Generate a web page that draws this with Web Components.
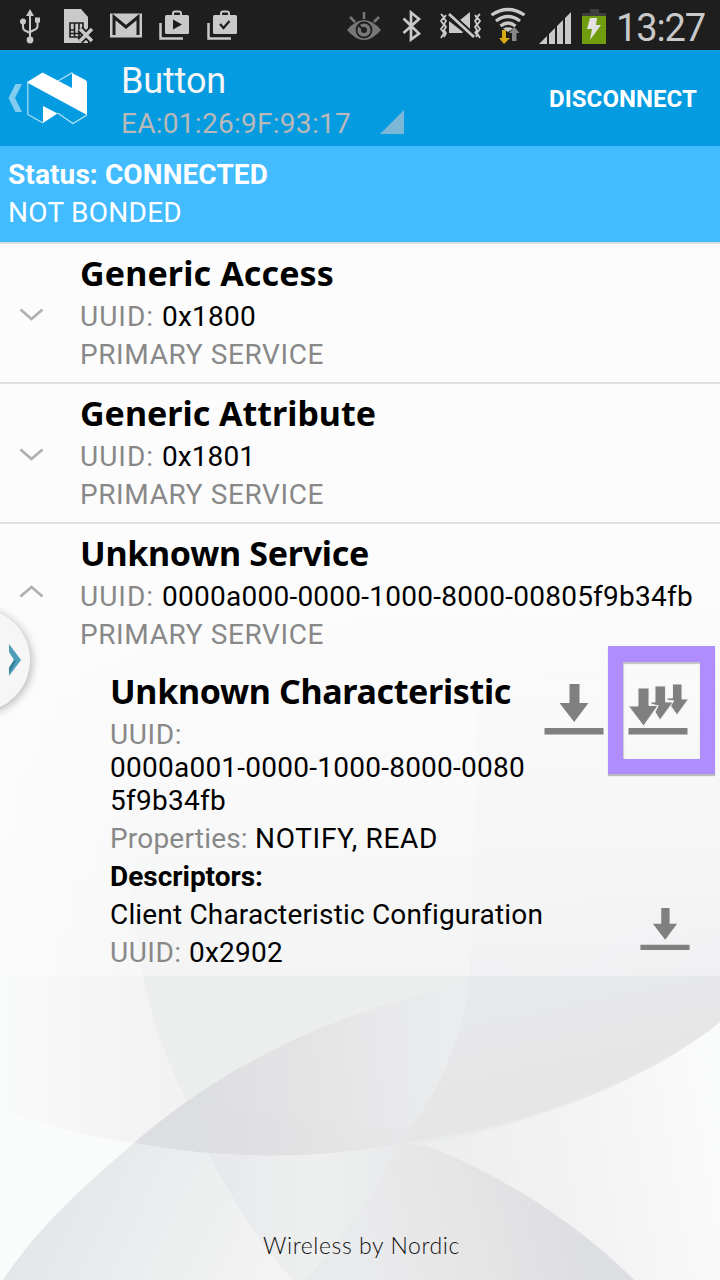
<!DOCTYPE html>
<html lang="en"><head><meta charset="utf-8"><title>Device services</title>
<style>html,body{margin:0;width:720px;height:1280px;overflow:hidden;background:#f5f5f5;font-family:Roboto,sans-serif}</style></head>
<body><app-screen></app-screen>
<script>
const define=(name,html,after)=>customElements.define(name,class extends HTMLElement{
  constructor(){super();this.attachShadow({mode:'open'}).innerHTML=html}
  connectedCallback(){if(after)after(this,this.shadowRoot)}
});

// Text tracked so that its line fills the width given in the w attribute.
define('fit-text','<style>:host{display:inline-block;white-space:pre;vertical-align:baseline}span{white-space:pre}</style><span></span>',(h,r)=>{
  const s=r.querySelector('span');s.textContent=h.getAttribute('t');
  const n=s.textContent.length,w=+h.getAttribute('w');
  s.style.letterSpacing=((w-s.getBoundingClientRect().width)/n)+'px';
});

define('status-bar',`<style>:host{display:flex;justify-content:space-between;height:50px;background:#1e1e1e;color:#c9c9c9}
svg{display:block}.r{display:flex}.t{width:104px;font-size:38px;line-height:57px}</style>
<svg width="250" height="50" fill="#c9c9c9" stroke="none">
<g><path d="M30 9l4 7h-8z"/><circle cx="30" cy="40" r="3.4"/><circle cx="23" cy="21.5" r="3"/><rect x="35" y="17.500" width="5" height="5"/><path d="M30 14V40M23 22V27Q23 30 26 31L30 33M37.500 21V26Q37.500 29 34 30L30 32" fill="none" stroke="#c9c9c9" stroke-width="2"/></g>
<path d="M64 9h17l7 8v26H64z"/><path d="M70 23h13v14H70zM70 30h4M79 30h4M74.500 23v14M79 23v14M70 33.500h13" fill="none" stroke="#1e1e1e" stroke-width="1.600"/><path d="M80 29l12 12M92 29L80 41" stroke="#1e1e1e" stroke-width="7"/><path d="M80 29l12 12M92 29L80 41" stroke="#c9c9c9" stroke-width="3.500"/>
<rect x="110" y="13.500" width="32" height="24"/><path d="M114 35V17L126 27 138 17V35" fill="none" stroke="#1e1e1e" stroke-width="3"/>
<g id="a"><path d="M160.500 23V38.500H183" fill="none" stroke="#c9c9c9" stroke-width="2.500"/><rect x="165" y="15" width="24" height="19" rx="1.500"/><path d="M173 16V13.500Q173 11.500 175 11.500H179Q181 11.500 181 13.500V16" fill="none" stroke="#c9c9c9" stroke-width="2"/></g><path d="M173 19.500l9 5-9 5z" fill="#1e1e1e"/>
<use href="#a" x="48"/><path d="M220 24l3.500 4 6-7" fill="none" stroke="#1e1e1e" stroke-width="2.200"/></svg>
<div class="r"><svg width="286" height="50" viewBox="330 0 286 50" fill="#c9c9c9">
<g fill="none" stroke="#777"><path d="M364 12v7M350 17l5 5M379 17l-5 5" stroke-width="2.500"/></g><path d="M347 30Q364 10 381 30Q364 50 347 30z" fill="#777"/><circle cx="364" cy="30" r="7.500" fill="none" stroke="#1e1e1e" stroke-width="1.800"/><circle cx="364" cy="30" r="3" fill="#1e1e1e"/><path d="M358.500 25l5 5" stroke="#1e1e1e" stroke-width="2"/>
<path d="M403.500 18.500L419 33.500 411 39.500V12.500L419 19 403.500 33" fill="none" stroke="#c9c9c9" stroke-width="2.700"/>
<g fill="none" stroke="#c9c9c9" stroke-width="1.800"><path d="M441 14l3 3-3 4 3 4-3 4 3 4-3 5M446 15l-2 3 2 3-2 3 2 3-2 3 2 3-2 4M480 14l-3 3 3 4-3 4 3 4-3 4 3 5M475 15l2 3-2 3 2 3-2 3 2 3-2 3 2 4"/></g><path d="M449 21l14 11-1 1H449zM460 20l10-8v17z"/><path d="M449 14l25 23" stroke="#1e1e1e" stroke-width="6"/><path d="M449 14l25 23" stroke="#c9c9c9" stroke-width="2.800"/>
<g fill="none" stroke="#c9c9c9" stroke-width="3.300"><path d="M491.500 15Q508 4 524.500 15M496 21Q508 12 520 21M500.500 26Q508 20 515.500 26"/></g><path d="M503 28.500Q508 26 513 28.500L508 32z"/><path d="M502 30h4v8h4l-6 6-5-6h3z" fill="#d7a90f"/><path d="M512 41V33h-3l5.500-6 5 6h-3v8z" fill="#888"/>
<path d="M539 44l8-8v8zM549 44V34l6-6v16zM557 44V26l6-6v24zM565 44V18l6-6v32z"/><rect x="590" y="9" width="9" height="4" fill="#3e3e3e"/><rect x="582" y="13" width="24" height="31" fill="#6f9d0e"/><rect x="582" y="13" width="24" height="3" fill="#3e3e3e"/><path d="M590 18h7l-1 7h5l-11 15 2-11h-5z" fill="#e2e2e2"/></svg><div class="t"><fit-text t="13:27" w="89"></fit-text></div></div>`);

define('action-bar',`<style>:host{display:flex;height:96px;background:#049be0;color:#f6f6f6}svg{display:block}
.n{width:429px;padding-left:1px;padding-top:10px;box-sizing:border-box}.n div:first-child{font-size:36px;line-height:42px}.m{font-size:28px;line-height:43px;height:44px;color:#b9b9b9;display:flex;gap:29px}
.d{font-weight:700;font-size:24px;line-height:98px;color:#fff}</style>
<svg width="120" height="96"><path d="M15.500 34H22L15 48 22 62H15.500L8.500 48z" fill="#82cdef"/><path d="M28 31.500L42.500 22.500 72 38V23L85.500 30Q87 31 87 33V65L28 33z" fill="#fff"/><path d="M43 56L57.500 63.500 43 73z" fill="#fff"/><path d="M27.800 31.500V64.500L43 73M58 31L72.500 22.500M57.500 63L73 73.500 87 65" fill="none" stroke="#bce6f8" stroke-width="1.100"/></svg>
<div class="n"><div><fit-text t="Button" w="105"></fit-text></div><div class="m"><fit-text t="EA:01:26:9F:93:17" w="230"></fit-text><svg width="24" height="32"><path d="M24 8V32H0z" fill="#7bb8d8"/></svg></div></div>
<div class="d"><fit-text t="DISCONNECT" w="148"></fit-text></div>`);

define('connection-status',`<style>:host{display:block;height:98px;box-sizing:border-box;background:#42bbff;border-bottom:2px solid #dadedf;color:#fff;padding:10px 8px 0;font-size:28px;line-height:38px}b{display:block}</style>
<b><fit-text t="Status: CONNECTED" w="260"></fit-text></b><fit-text t="NOT BONDED" w="174"></fit-text>`);

define('service-row',`<style>:host{display:flex;height:140px;box-sizing:border-box;border-bottom:2px solid #dedfdf;font-size:28px;line-height:38px;color:#888}
:host([open]){border:0;height:130px}
.c{width:80px}.c svg{display:block;margin-top:64px}.h{font:700 34px/50px "Noto Sans",sans-serif;color:#000;padding-top:4px}.v{color:#000}
.l{height:38px;display:flex}:host([open]) .c svg{transform:scaleY(-1);margin-top:60px}</style>
<div class="c"><svg width="60" height="14"><path d="M20.500 1.500L31.500 11 42.500 1.500" fill="none" stroke="#b0b0b0" stroke-width="2.800"/></svg></div><div class="x"></div>`,(h,r)=>{
 const a=k=>h.getAttribute(k);
 r.querySelector('.x').innerHTML=`<div class="h"><fit-text t="${a('name')}" w="${a('nw')}"></fit-text></div><div class="l"><fit-text t="UUID: " w="82"></fit-text><fit-text class="v" t="${a('uuid')}" w="${a('uw')}"></fit-text></div><div class="l"><fit-text t="PRIMARY SERVICE" w="244"></fit-text></div>`});

define('read-icon',`<style>:host{display:block}svg{display:block;width:100%}</style><svg viewBox="0 0 60 51"><path d="M25.500 0H35.500V19H44.500L30.200 38 15.500 19H25.500zM.500 44H59.500V50.500H.500z" fill="#808080"/></svg>`);
define('notify-icon',`<style>:host{display:block}svg{display:block}</style><svg width="62" height="51"><g fill="#808080" stroke="#f1f2f2" stroke-width="1"><path d="M44.500 0H54V15H60.500L49 31 42 21 46 17 39 16V14H44.500z"/><path d="M27 2H37.500V18H45L43 21 32 36 27 28 30 22 23 20V18H27z"/><path d="M10 4H21V21.500H30L15.500 42 .500 22H10z"/></g><path d="M.500 44H59.500V50.500H.500z" fill="#808080"/></svg>`);

define('characteristic-row',`<style>:host{display:flex;position:relative;height:322px;box-sizing:border-box;padding-left:110px;font-size:28px;line-height:33px;color:#888}
.x{width:434px;padding-top:12px}.h{font:700 34px/50px "Noto Sans",sans-serif;color:#000}.p{height:33px;padding:2.500px 0}.u{height:99px;padding:2px 0 2.500px}.u fit-text{display:block}.k{color:#000}b{color:#000}
.a{display:grid;width:176px;grid-template-columns:84px 1fr;align-content:start;padding-top:30px;row-gap:173px}.a read-icon{width:60px}.s{grid-column:1/3;padding-left:96px}.s read-icon{width:50px}
.box{position:absolute;left:608px;top:-8px;width:107px;height:128px;box-sizing:border-box;border:15px solid #b08dff;border-top-width:16px;box-shadow:0 2px 1px #bbb,inset 0 2px 1px #c2c2c2,inset 1px 0 1px #ccc}</style>
<div class="x"><div class="h"><fit-text t="Unknown Characteristic" w="401"></fit-text></div>
<div class="u"><fit-text t="UUID:" w="72"></fit-text><fit-text class="k" t="0000a001-0000-1000-8000-0080" w="415"></fit-text><fit-text class="k" t="5f9b34fb" w="116"></fit-text></div>
<div class="p"><fit-text t="Properties: " w="145"></fit-text><fit-text class="k" t="NOTIFY, READ" w="183"></fit-text></div>
<div class="p"><b><fit-text t="Descriptors:" w="153"></fit-text></b></div>
<div class="p k"><fit-text t="Client Characteristic Configuration" w="432"></fit-text></div>
<div class="p"><fit-text t="UUID: " w="79"></fit-text><fit-text class="k" t="0x2902" w="94"></fit-text></div></div>
<div class="a"><read-icon></read-icon><notify-icon></notify-icon><div class="s"><read-icon></read-icon></div></div><div class="box"></div>`);

define('drawer-handle',`<style>:host{position:absolute;left:0;top:590px;width:60px;height:140px;overflow:hidden}div{position:absolute;left:-74px;top:18px;width:104px;height:104px;border-radius:50%;background:#f6f6f6;box-shadow:2px 2px 9px #0004}svg{position:absolute;left:9px;top:54px}</style><div></div><svg width="14" height="34"><path d="M0 0L12 16 0 32V24L5 16 0 8z" fill="#4c9db8"/><path d="M0 24L5 16 7 17 0 29z" fill="#347c98"/></svg>`);

define('petal-backdrop',`<style>:host{position:absolute;inset:0;z-index:-1}svg{display:block}</style><svg width="720" height="1280">
<defs>
<linearGradient id="b"><stop stop-color="#f9fafa"/><stop offset=".2" stop-color="#f3f3f3"/><stop offset=".65" stop-color="#e9eaec"/><stop offset="1" stop-color="#e7e8ea"/></linearGradient>
<linearGradient id="c" gradientUnits="userSpaceOnUse" x1="60" y1="1170" x2="270" y2="1270"><stop stop-color="#e4e6e9"/><stop offset=".5" stop-color="#ebedee"/><stop offset="1" stop-color="#f3f3f3"/></linearGradient>
<linearGradient id="d" gradientUnits="userSpaceOnUse" x1="200" y1="1060" x2="450" y2="1040"><stop stop-color="#dddee1"/><stop offset=".5" stop-color="#e5e5e6"/><stop offset=".85" stop-color="#e9eaec"/><stop offset="1" stop-color="#ebecee"/></linearGradient>
<linearGradient id="e" gradientUnits="userSpaceOnUse" x1="370" y1="1250" x2="570" y2="1200"><stop stop-color="#e9eaec"/><stop offset=".4" stop-color="#e7e6e7"/><stop offset="1" stop-color="#dddee1"/></linearGradient>
<linearGradient id="f" gradientUnits="userSpaceOnUse" x1="430" y1="1130" x2="720" y2="1080"><stop stop-color="#eceeed"/><stop offset=".5" stop-color="#f3f3f3"/><stop offset="1" stop-color="#fafbfb"/></linearGradient>
<linearGradient id="p" gradientUnits="userSpaceOnUse" x1="0" y1="680" x2="0" y2="980"><stop stop-color="#f4f5f5"/><stop offset="1" stop-color="#eceeed"/></linearGradient>
<linearGradient id="r" gradientUnits="userSpaceOnUse" x1="560" y1="880" x2="610" y2="1120"><stop stop-color="#ebecee"/><stop offset=".5" stop-color="#e7e8eb"/><stop offset=".75" stop-color="#e6e6e6"/><stop offset="1" stop-color="#e4e6e5"/></linearGradient>
<linearGradient id="h" gradientUnits="userSpaceOnUse" x1="230" y1="0" x2="400" y2="0"><stop stop-color="#e7e9ec"/><stop offset=".5" stop-color="#eef0ef"/><stop offset="1" stop-color="#e8e9eb"/></linearGradient>
<linearGradient id="w" x1="0" y1="0" x2="0" y2="1"><stop stop-color="#fcfcfc"/><stop offset=".5" stop-color="#fcfcfc" stop-opacity=".96"/><stop offset=".8" stop-color="#fcfcfc" stop-opacity=".65"/><stop offset="1" stop-color="#fcfcfc" stop-opacity=".42"/></linearGradient></defs>
<rect width="720" height="1280" fill="#fafbfb"/><path d="M395 1135L720 1000V1280H395z" fill="url(#f)"/>
<path d="M0 500H720V1022C630 1096 455 1156 290 1156C175 1156 80 1138 0 1109z" fill="url(#b)"/>
<path d="M130 680Q125 880 143 976Q156 1042 188 1103L300 1120 400 1144Q462 1060 470 976L478 680z" fill="url(#p)"/>
<path d="M478 680L470 976Q462 1060 400 1144Q590 1117 720 1022V680z" fill="url(#r)"/>
<path d="M3 1280C40 1225 85 1185 134 1143Q270 1168 400 1144C500 1175 580 1225 634 1280z" fill="url(#c)"/>
<path d="M134 1143C190 1095 280 1030 436 990L470 976Q462 1060 400 1144Q270 1168 134 1143z" fill="url(#d)"/>
<path d="M208 1153Q245 1225 292 1280H305Q370 1210 400 1144Q310 1162 208 1153z" fill="url(#h)"/>
<path d="M305 1280Q365 1214 400 1144L425 1145C515 1180 590 1235 634 1280z" fill="url(#e)"/>
<path d="M188 1103L208 1153Q305 1162 400 1144L412 1126 370 1128z" fill="#ddd" opacity=".12"/>
<rect y="242" width="720" height="734" fill="url(#w)"/></svg>`);

define('app-screen',`<style>:host{display:flex;flex-direction:column;position:relative;z-index:0;width:720px;height:1280px;overflow:hidden}footer{margin-top:auto;height:49px;text-align:center;font:300 23px/28px Lato,sans-serif;color:#111;padding-left:3px}</style>
<petal-backdrop></petal-backdrop><status-bar></status-bar><action-bar></action-bar><connection-status></connection-status>
<service-row name="Generic Access" nw="254" uuid="0x1800" uw="94"></service-row>
<service-row name="Generic Attribute" nw="296" uuid="0x1801" uw="93"></service-row>
<service-row open name="Unknown Service" nw="289" uuid="0000a000-0000-1000-8000-00805f9b34fb" uw="531"></service-row>
<characteristic-row></characteristic-row><footer><fit-text t="Wireless by Nordic" w="197"></fit-text></footer><drawer-handle></drawer-handle>`);
</script></body></html>
